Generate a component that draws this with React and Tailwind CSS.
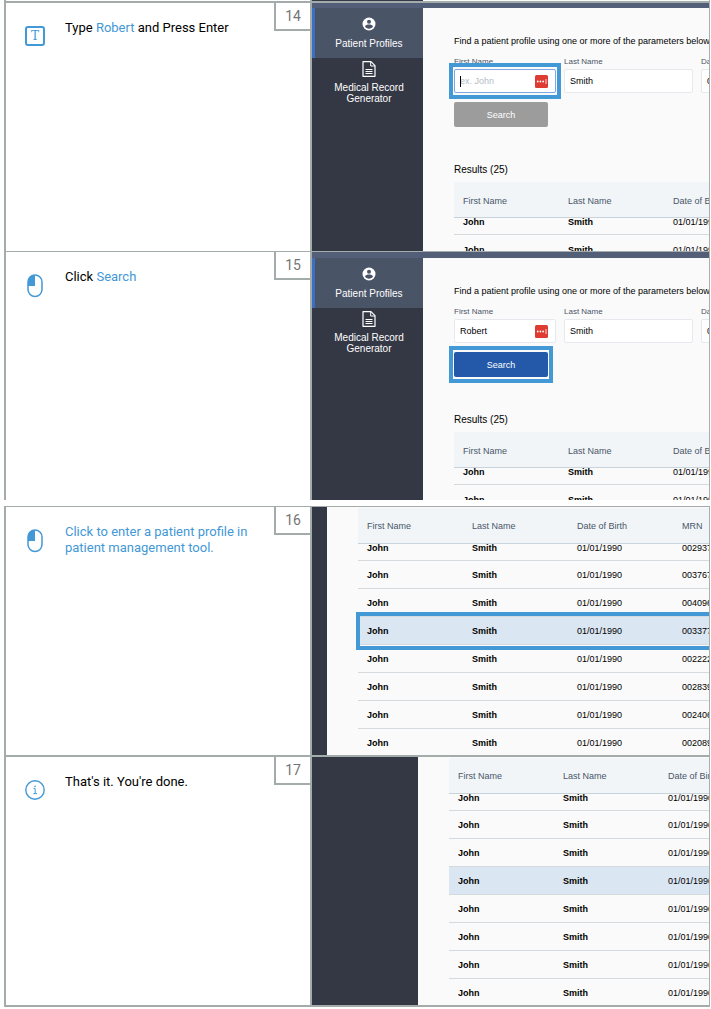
import React from 'react';

const PATIENTS = ['002937', '003767', '004096', '003377', '002222', '002839', '002406', '002089'];

export default function App() {
  return (
    <div className="bg-white pl-1 pr-px font-['Roboto',sans-serif]">
      <div className="grid h-px grid-cols-[308px_minmax(0,1fr)]">
        <div className="border-x-2 border-[#a3abab]"></div>
        <div className="flex border-r border-[#a3abab] bg-[#fafafa]">
          <div className="w-[111px] bg-[#343744]"></div>
        </div>
      </div>

      <Step number={14} icon={<TypeIcon />} text={<>Type <Accent>Robert</Accent> and Press Enter</>} line="border-t-2">
        <div className="h-[5px] shrink-0 bg-[#535f78]"></div>
        <SearchScreen id="type" firstName="" highlight="input" />
      </Step>

      <Step number={15} icon={<MouseIcon />} text={<>Click <Accent>Search</Accent></>} line="border-t">
        <div className="h-1.5 shrink-0 bg-[#535f78]"></div>
        <SearchScreen id="click" firstName="Robert" highlight="button" />
      </Step>

      <div className="h-1.5"></div>

      <Step number={16} icon={<MouseIcon />} text={<Accent>Click to enter a patient profile in patient management tool.</Accent>} line="border-t">
        <ResultsScreen sidebar="w-[15px]" columns={4} selected={3} outlined />
      </Step>

      <Step number={17} icon={<InfoIcon />} text="That's it. You're done." line="border-t-2">
        <ResultsScreen sidebar="w-[106px]" columns={3} selected={3} />
      </Step>
      <div className="h-0.5 bg-[#a3abab]"></div>
    </div>
  );
}

function Step({ number, icon, text, line, children }) {
  return (
    <section className={`grid grid-cols-[308px_minmax(0,1fr)] border-[#a3abab] ${line}`}>
      <div className="flex items-start border-x-2 border-[#a3abab] pl-[19px]">
        <div className="mt-[22px] flex h-6 w-5 shrink-0 items-start justify-center">{icon}</div>
        <p className="ml-5 mt-[17px] flex-1 text-[13px] leading-4 text-black">{text}</p>
        <div className="h-7 w-9 shrink-0 border-b-2 border-l-2 border-[#a3abab] text-center text-sm leading-[26px] text-[#757575]">
          {number}
        </div>
      </div>
      <div className="flex h-[248px] flex-col overflow-hidden border-r border-[#a9b0b0] bg-[#fafafa] font-['Liberation_Sans',sans-serif]">
        {children}
      </div>
    </section>
  );
}

function Accent({ children }) {
  return <span className="text-[#4398d6]">{children}</span>;
}

function SearchScreen({ id, firstName, highlight }) {
  return (
    <div className="flex min-h-0 flex-1">
      <nav className="w-[111px] shrink-0 bg-[#343744] text-center text-[10px] leading-[11px] text-white">
        <a href="#profiles" className="flex h-[50px] flex-col items-center border-l-[3px] border-[#3c6fc0] bg-[#4a5467] pt-[9px]">
          <ProfileIcon />
          <span className="mt-[7px]">Patient Profiles</span>
        </a>
        <a href="#generator" className="flex flex-col items-center border-l-[3px] border-transparent px-4 pt-[3px]">
          <FileIcon />
          <span className="mt-[5px]">Medical Record Generator</span>
        </a>
      </nav>

      <main className="min-w-0 flex-1 overflow-hidden pl-[31px] text-[9px] leading-3 text-black">
        <p className="mt-[27px] whitespace-nowrap">Find a patient profile using one or more of the parameters below:</p>
        <form className="mt-[9px]">
          <div className="flex gap-2">
            <Field id={`${id}-first`} label="First Name" width="w-[102px]" value={firstName} placeholder="ex. John" autofill focused={highlight === 'input'} />
            <Field id={`${id}-last`} label="Last Name" width="w-[129px]" value="Smith" />
            <Field id={`${id}-dob`} label="Date of Birth" width="w-[129px]" value="01/01/1990" />
          </div>
          <div className="relative mt-[9px] w-[94px]">
            <button
              type="button"
              className={`block h-[25px] w-full rounded-xs text-white ${highlight === 'button' ? 'bg-[#2458a9]' : 'bg-[#9c9c9c]'}`}
            >
              Search
            </button>
            {highlight === 'button' && <Outline />}
          </div>
        </form>
        <h2 className="mt-9 text-[10px] leading-[14px]">Results (25)</h2>
        <div className="mt-[5px]">
          <PatientTable columns={3} rows={PATIENTS.slice(0, 2)} />
        </div>
      </main>
    </div>
  );
}

function Field({ id, label, width, value, placeholder, autofill, focused }) {
  return (
    <div className={`shrink-0 ${width}`}>
      <label htmlFor={id} className="block pb-px text-[8px] leading-3 text-[#4a5568]">{label}</label>
      <div className="relative">
        <input
          id={id}
          type="text"
          defaultValue={value}
          placeholder={placeholder}
          className={`block h-6 w-full rounded-xs border bg-white px-[5px] text-[9px] placeholder:text-[#b4bcc8] ${focused ? 'border-[#7ea6e0]' : 'border-[#e6e9ed]'}`}
        />
        {focused && <span className="absolute top-[7px] left-[6px] h-[11px] w-px bg-black"></span>}
        {autofill && <AutofillIcon />}
        {focused && <Outline />}
      </div>
    </div>
  );
}

function Outline() {
  return <span className="pointer-events-none absolute -inset-x-[5px] -inset-y-[6px] border-4 border-[#4398d6]"></span>;
}

function ResultsScreen({ sidebar, columns, selected, outlined }) {
  return (
    <div className="flex flex-1 text-[9px] text-black">
      <div className={`shrink-0 bg-[#343744] ${sidebar}`}></div>
      <div className="min-w-0 flex-1 pt-px pl-[31px]">
        <PatientTable columns={columns} rows={PATIENTS} selected={selected} outlined={outlined} />
      </div>
    </div>
  );
}

function PatientTable({ columns, rows, selected, outlined }) {
  const headings = ['First Name', 'Last Name', 'Date of Birth', 'MRN'].slice(0, columns);

  return (
    <table className="w-full table-fixed border-separate border-spacing-0 text-left whitespace-nowrap">
      <thead>
        <tr>
          {headings.map((heading, i) => (
            <th
              key={heading}
              className={`h-9 border-b border-[#c9d3db] bg-[#f1f5f8] pt-0.5 pl-[9px] font-normal text-[#4a5568] ${i < columns - 1 ? 'w-[105px]' : ''}`}
            >
              {heading}
            </th>
          ))}
        </tr>
      </thead>
      <tbody>
        {rows.map((mrn, row) => {
          // the first row is scrolled halfway under the header
          const size = row === 0 ? 'h-[17px] align-top leading-[8px]' : 'h-7 pt-0.5';
          const fill = row === selected ? 'bg-[#dbe6f3]' : '';
          const cells = ['John', 'Smith', '01/01/1990', mrn].slice(0, columns);
          return (
            <tr key={mrn}>
              {cells.map((cell, i) => (
                <td key={i} className={`relative border-b border-[#d5dade] pl-[9px] ${size} ${fill} ${i < 2 ? 'font-bold' : ''}`}>
                  {cell}
                  {outlined && row === selected && i === 0 && (
                    <span className="pointer-events-none absolute -top-[5px] -bottom-[6px] -left-0.5 z-10 w-screen border-4 border-[#4398d6]"></span>
                  )}
                </td>
              ))}
            </tr>
          );
        })}
      </tbody>
    </table>
  );
}

function TypeIcon() {
  return (
    <span className="mt-px flex h-5 w-5 shrink-0 items-center justify-center rounded-[3px] border-2 border-[#4398d6] font-['DejaVu_Serif',serif] text-xs text-[#4398d6]">
      T
    </span>
  );
}

function MouseIcon() {
  return (
    <svg width="16" height="24" viewBox="0 0 16 24" fill="none">
      <path d="M8 1C3.5 1 1 4 1 7.5V12H8Z" fill="#4398d6" />
      <rect x="1" y="1" width="14" height="21.5" rx="7" stroke="#4398d6" strokeWidth="1.5" />
    </svg>
  );
}

function InfoIcon() {
  return (
    <svg className="mt-px" width="20" height="20" viewBox="0 0 20 20" fill="none" stroke="#4398d6">
      <circle cx="10" cy="10" r="9.2" strokeWidth="1.4" />
      <path d="M8.6 8.6H10.2V13.6M8.4 13.6H12" strokeWidth="1" />
      <circle cx="10" cy="6.4" r="0.8" fill="#4398d6" stroke="none" />
    </svg>
  );
}

function ProfileIcon() {
  return (
    <svg width="14" height="14" viewBox="0 0 14 14">
      <circle cx="7" cy="7" r="6.5" fill="#fff" />
      <circle cx="7" cy="4.7" r="2" fill="#4a5467" />
      <path d="M3 9.6C3.4 8 5.4 7.5 7 7.5S10.6 8 11 9.6C10.2 10.9 8.8 11.7 7 11.7S3.8 10.9 3 9.6Z" fill="#4a5467" />
    </svg>
  );
}

function FileIcon() {
  return (
    <svg width="14" height="16" viewBox="0 0 14 16" fill="none" stroke="#fff">
      <path d="M1 .7H9L13 4.7V15.3H1Z" strokeWidth="1.2" strokeLinejoin="round" />
      <path d="M8.7 1V5H13" strokeWidth="1" />
      <path d="M3.5 8.5H10.5M3.5 10.5H10.5M3.5 12.5H10.5" strokeWidth="1" />
    </svg>
  );
}

function AutofillIcon() {
  return (
    <svg className="absolute top-1.5 right-2" width="13" height="13" viewBox="0 0 13 13">
      <rect width="13" height="13" rx="1.5" fill="#de3c33" />
      <circle cx="2.7" cy="6.5" r=".9" fill="#fff" />
      <circle cx="5.4" cy="6.5" r=".9" fill="#fff" />
      <circle cx="8.1" cy="6.5" r=".9" fill="#fff" />
      <path d="M11 4V9" stroke="#fff" strokeWidth=".8" />
    </svg>
  );
}
